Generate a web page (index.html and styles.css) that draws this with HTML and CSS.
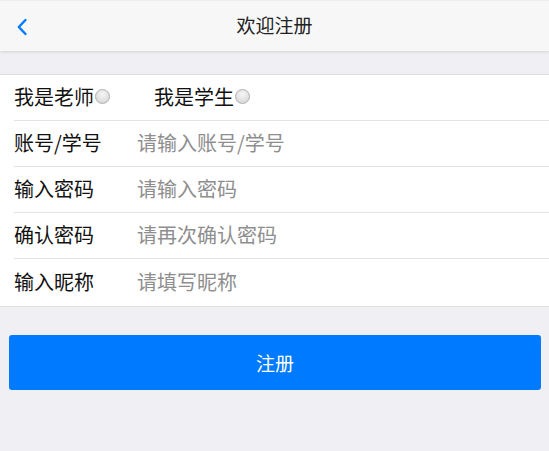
FILE: index.html
```html
<!DOCTYPE html>
<html lang="zh">
<head>
<meta charset="utf-8">
<title>欢迎注册</title>
<link rel="stylesheet" href="styles.css">
</head>
<body>
<header class="bar">
  <span class="back"><svg width="12" height="18" viewBox="0 0 12 18"><path d="M9.5 2 L2.8 9 L9.5 16" fill="none" stroke="#007aff" stroke-width="2.4" stroke-linecap="round" stroke-linejoin="round"/></svg></span>
  <h1 class="title">欢迎注册</h1>
</header>
<main class="content">
  <form class="form">
    <div class="row role-row">
      <label class="role">我是老师<span class="radio"></span></label>
      <label class="role role-2">我是学生<span class="radio"></span></label>
    </div>
    <div class="row"><span class="label">账号/学号</span><input class="input" placeholder="请输入账号/学号"></div>
    <div class="row"><span class="label">输入密码</span><input class="input" type="password" placeholder="请输入密码"></div>
    <div class="row"><span class="label">确认密码</span><input class="input" type="password" placeholder="请再次确认密码"></div>
    <div class="row last"><span class="label">输入昵称</span><input class="input" placeholder="请填写昵称"></div>
  </form>
  <button class="submit" type="button">注册</button>
</main>
</body>
</html>
```
FILE: styles.css
```css
* { box-sizing: border-box; }
html, body {
  margin: 0;
  padding: 0;
  height: 100%;
  background: #efeff4;
  font-family: "Noto Sans CJK SC", "Noto Sans", sans-serif;
}
.bar {
  position: relative;
  height: 51px;
  padding-bottom: 4px;
  background: #f7f7f7;
  border-top: 1px solid #eeeeee;
  box-shadow: 0 1px 3px rgba(0,0,0,0.12);
  display: flex;
  align-items: center;
  justify-content: center;
}
.back {
  position: absolute;
  left: 16px;
  top: 17px;
  display: block;
  width: 12px;
  height: 18px;
}
.back svg { display: block; }
.title {
  margin: 0;
  font-size: 19px;
  font-weight: normal;
  color: #222;
  line-height: 1;
}
.content {
  padding-top: 23px;
}
.form {
  margin: 0;
  background: #fff;
  border-top: 1px solid #dedede;
  border-bottom: 1px solid #dedede;
}
.row {
  height: 46px;
  margin-left: 14px;
  padding-bottom: 3px;
  border-bottom: 1px solid #e3e3e3;
  display: flex;
  align-items: center;
  font-size: 20px;
  color: #111;
}
.row.last { border-bottom: none; height: 47px; }
.role {
  display: flex;
  align-items: center;
}
.role-2 { margin-left: 44px; }
.radio {
  display: inline-block;
  width: 15px;
  height: 15px;
  margin-left: 1px;
  border-radius: 50%;
  border: 1px solid #b0b0b0;
  background: radial-gradient(circle at 50% 35%, #f6f6f6 0%, #e0e0e0 60%, #cdcdcd 100%);
}
.label {
  width: 123px;
  flex: none;
}
.input {
  flex: 1;
  border: none;
  outline: none;
  background: transparent;
  padding: 0;
  font-family: inherit;
  font-size: 20px;
  color: #111;
}
.input::placeholder { color: #8e8e8e; }
.submit {
  display: block;
  margin: 28px 8px 0 9px;
  width: 532px;
  height: 55px;
  border: none;
  border-radius: 3px;
  background: #007aff;
  color: #fff;
  font-family: inherit;
  font-size: 19px;
}
```
